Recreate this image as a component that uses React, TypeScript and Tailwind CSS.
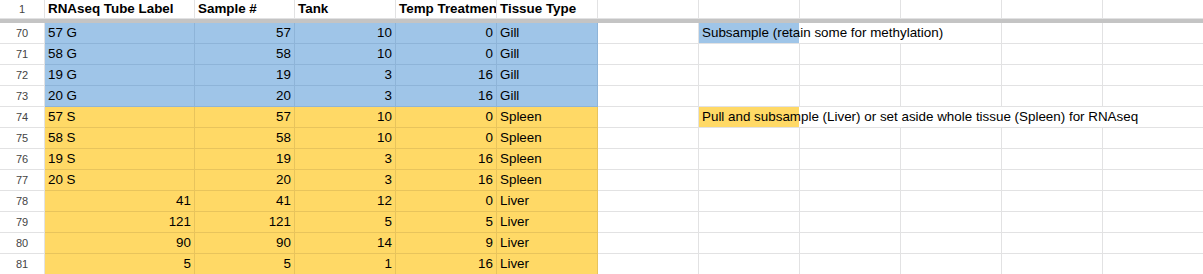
import React from 'react';

type Row = {
  n: number;
  a: string;
  aRight?: boolean;
  b: string;
  c: string;
  d: string;
  e: string;
  color: 'blue' | 'yellow';
  note?: string;
};

const rows: Row[] = [
  { n: 70, a: '57 G', b: '57', c: '10', d: '0', e: 'Gill', color: 'blue', note: 'Subsample (retain some for methylation)' },
  { n: 71, a: '58 G', b: '58', c: '10', d: '0', e: 'Gill', color: 'blue' },
  { n: 72, a: '19 G', b: '19', c: '3', d: '16', e: 'Gill', color: 'blue' },
  { n: 73, a: '20 G', b: '20', c: '3', d: '16', e: 'Gill', color: 'blue' },
  { n: 74, a: '57 S', b: '57', c: '10', d: '0', e: 'Spleen', color: 'yellow', note: 'Pull and subsample (Liver) or set aside whole tissue (Spleen) for RNAseq' },
  { n: 75, a: '58 S', b: '58', c: '10', d: '0', e: 'Spleen', color: 'yellow' },
  { n: 76, a: '19 S', b: '19', c: '3', d: '16', e: 'Spleen', color: 'yellow' },
  { n: 77, a: '20 S', b: '20', c: '3', d: '16', e: 'Spleen', color: 'yellow' },
  { n: 78, a: '41', aRight: true, b: '41', c: '12', d: '0', e: 'Liver', color: 'yellow' },
  { n: 79, a: '121', aRight: true, b: '121', c: '5', d: '5', e: 'Liver', color: 'yellow' },
  { n: 80, a: '90', aRight: true, b: '90', c: '14', d: '9', e: 'Liver', color: 'yellow' },
  { n: 81, a: '5', aRight: true, b: '5', c: '1', d: '16', e: 'Liver', color: 'yellow' },
];

const widths = ['w-[150px]', 'w-[100px]', 'w-[101px]', 'w-[101px]', 'w-[101px]'];
const blank = 'shrink-0 w-[101px] h-full border-r border-b border-[#e2e2e3]';

function Cell({ w, cls, right, children }: { w: string; cls: string; right?: boolean; children?: React.ReactNode }) {
  return (
    <div
      className={`shrink-0 ${w} h-full border-r border-b ${cls} flex items-center overflow-hidden whitespace-nowrap px-[3px] ${right ? 'justify-end' : ''}`}
    >
      {children}
    </div>
  );
}

export default function App() {
  return (
    <div className="w-[1203px] h-[274px] overflow-hidden bg-white text-[13.4px] text-black font-['Liberation_Sans',Arial,sans-serif]">
      {/* header row */}
      <div className="flex h-[19px]">
        <div className="shrink-0 w-[45px] h-full border-r border-b border-[#e2e2e3] flex items-center justify-center text-[11px] text-[#444]">
          1
        </div>
        {['RNAseq Tube Label', 'Sample #', 'Tank', 'Temp Treatment', 'Tissue Type'].map((h, i) => (
          <Cell key={h} w={widths[i]} cls="border-[#e2e2e3] font-bold pt-[1px]">
            {h}
          </Cell>
        ))}
        {Array.from({ length: 6 }).map((_, i) => (
          <div key={i} className={blank} />
        ))}
      </div>
      <div className="h-[4px] bg-[#c4c4c4]" />

      {rows.map(r => {
        const cls = r.color === 'blue' ? 'bg-[#9fc5e8] border-[#8eb4d8]' : 'bg-[#ffd966] border-[#e8c45c]';
        return (
          <div key={r.n} className="flex h-[21px]">
            <div className="shrink-0 w-[45px] h-full border-r border-b border-[#e2e2e3] flex items-center justify-center text-[11px] text-[#444]">
              {r.n}
            </div>
            <Cell w={widths[0]} cls={cls} right={r.aRight}>{r.a}</Cell>
            <Cell w={widths[1]} cls={cls} right>{r.b}</Cell>
            <Cell w={widths[2]} cls={cls} right>{r.c}</Cell>
            <Cell w={widths[3]} cls={cls} right>{r.d}</Cell>
            <Cell w={widths[4]} cls={cls}>{r.e}</Cell>
            <div className={blank} />
            {r.n === 70 ? (
              <>
                <div className="shrink-0 w-[303px] h-full border-r border-b border-[#e2e2e3] flex items-center whitespace-nowrap px-[3px] bg-[linear-gradient(to_right,#9fc5e8_100px,#ffffff_100px)]">
                  {r.note}
                </div>
                <div className={blank} />
                <div className={blank} />
              </>
            ) : r.n === 74 ? (
              <div className="shrink-0 w-[505px] h-full border-b border-[#e2e2e3] flex items-center whitespace-nowrap px-[3px] bg-[linear-gradient(to_right,#ffd966_100px,#ffffff_100px)]">
                {r.note}
              </div>
            ) : (
              Array.from({ length: 5 }).map((_, i) => <div key={i} className={blank} />)
            )}
          </div>
        );
      })}
    </div>
  );
}
